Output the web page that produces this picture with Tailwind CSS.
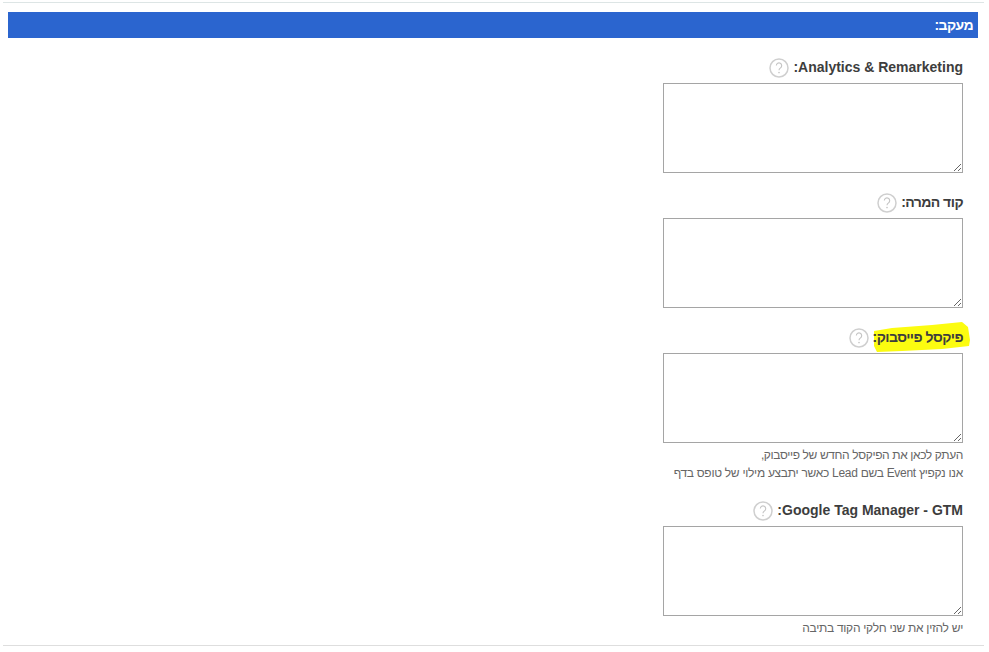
<!DOCTYPE html>
<html lang="he" dir="rtl">
  <head>
    <meta charset="UTF-8" />
    <meta name="viewport" content="width=device-width, initial-scale=1.0" />
    <title>מעקב</title>
    <script src="https://cdn.jsdelivr.net/npm/@tailwindcss/browser@4"></script>
  </head>
  <body class="bg-white font-['Liberation_Sans',Arial,sans-serif] text-[#3d3d3d] overflow-hidden">
    <div class="h-[652px] w-[989px] pt-[2px]">
      <div class="ml-[3px] mr-[5px] h-[1px] bg-[#dde5e5]"></div>

      <div class="mt-[9px] ml-[8px] mr-[11px] h-[26px] bg-[#2b65cf] flex items-center pr-[5px]">
        <h2 class="text-[14px] font-bold text-white leading-none tracking-[-0.6px]">מעקב:</h2>
      </div>

      <div class="mr-[26px] w-[300px] pt-[16px]">
        <!-- analytics -->
        <div class="h-[26px] flex items-center gap-[4px]">
          <label class="text-[14px] font-bold leading-none">Analytics &amp; Remarketing:</label>
          <svg class="mt-[2px] w-[20px] h-[20px]" viewBox="0 0 20 20" fill="none">
            <circle cx="10" cy="10" r="9" stroke="#cfcfcf" stroke-width="1.5" />
            <path d="M7.3 7.6a2.7 2.7 0 1 1 4.2 2.3c-1 .7-1.5 1.2-1.5 2.4" stroke="#c4c4c4" stroke-width="1.1" />
            <circle cx="10" cy="14.6" r=".8" fill="#c4c4c4" />
          </svg>
        </div>
        <textarea dir="ltr" class="block mt-[3px] w-[300px] h-[90px] bg-white border border-[#a5a5a5] outline-none"></textarea>

        <!-- conversion -->
        <div class="mt-[16px] h-[26px] flex items-center gap-[4px]">
          <label class="text-[14px] font-bold leading-none tracking-[-0.55px]">קוד המרה:</label>
          <svg class="mt-[2px] w-[20px] h-[20px]" viewBox="0 0 20 20" fill="none">
            <circle cx="10" cy="10" r="9" stroke="#cfcfcf" stroke-width="1.5" />
            <path d="M7.3 7.6a2.7 2.7 0 1 1 4.2 2.3c-1 .7-1.5 1.2-1.5 2.4" stroke="#c4c4c4" stroke-width="1.1" />
            <circle cx="10" cy="14.6" r=".8" fill="#c4c4c4" />
          </svg>
        </div>
        <textarea dir="ltr" class="block mt-[3px] w-[300px] h-[90px] bg-white border border-[#a5a5a5] outline-none"></textarea>

        <!-- facebook pixel -->
        <div class="mt-[16px] h-[26px] flex items-center gap-[4px] relative">
          <svg class="absolute right-[-8px] top-[-2px] w-[99px] h-[31px]" viewBox="0 0 99 31">
            <path d="M2 9 L20 6 L60 3 L90 0 L96 5 L98 18 L97 24 L70 27 L30 29 L5 30 L2 24 Z" fill="#fcfc10" />
          </svg>
          <label class="relative text-[14px] font-bold leading-none tracking-[-0.55px]">פיקסל פייסבוק:</label>
          <svg class="relative mt-[2px] w-[20px] h-[20px]" viewBox="0 0 20 20" fill="none">
            <circle cx="10" cy="10" r="9" stroke="#cfcfcf" stroke-width="1.5" />
            <path d="M7.3 7.6a2.7 2.7 0 1 1 4.2 2.3c-1 .7-1.5 1.2-1.5 2.4" stroke="#c4c4c4" stroke-width="1.1" />
            <circle cx="10" cy="14.6" r=".8" fill="#c4c4c4" />
          </svg>
        </div>
        <textarea dir="ltr" class="block mt-[3px] w-[300px] h-[90px] bg-white border border-[#a5a5a5] outline-none"></textarea>
        <p class="mt-[3px] text-[12px] leading-[18px] text-[#666] tracking-[-0.38px]">
          העתק לכאן את הפיקסל החדש של פייסבוק,<br />
          <span class="tracking-[-0.29px]">אנו נקפיץ Event בשם Lead כאשר יתבצע מילוי של טופס בדף</span>
        </p>

        <!-- gtm -->
        <div class="mt-[15px] h-[26px] flex items-center gap-[4px]">
          <label class="text-[14px] font-bold leading-none">Google Tag Manager - GTM:</label>
          <svg class="mt-[2px] w-[20px] h-[20px]" viewBox="0 0 20 20" fill="none">
            <circle cx="10" cy="10" r="9" stroke="#cfcfcf" stroke-width="1.5" />
            <path d="M7.3 7.6a2.7 2.7 0 1 1 4.2 2.3c-1 .7-1.5 1.2-1.5 2.4" stroke="#c4c4c4" stroke-width="1.1" />
            <circle cx="10" cy="14.6" r=".8" fill="#c4c4c4" />
          </svg>
        </div>
        <textarea dir="ltr" class="block mt-[3px] w-[300px] h-[90px] bg-white border border-[#a5a5a5] outline-none"></textarea>
        <p class="mt-[3px] text-[12px] leading-[18px] text-[#666] tracking-[-0.3px]">יש להזין את שני חלקי הקוד בתיבה</p>
      </div>

      <div class="mt-[8px] ml-[3px] mr-[5px] h-[1px] bg-[#dedede]"></div>
    </div>
  </body>
</html>
